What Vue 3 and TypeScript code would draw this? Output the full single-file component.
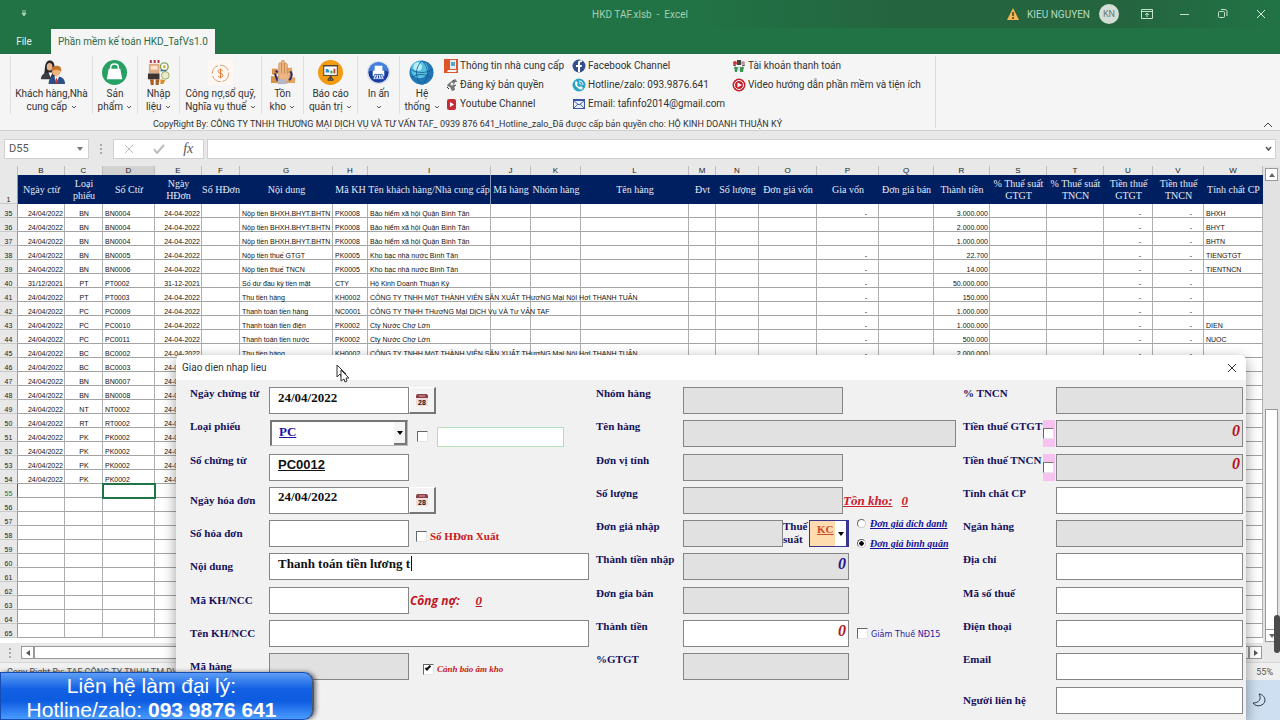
<script setup lang="ts">
import { ref } from 'vue'

interface BigAction { icon: string; lines: string[]; width: number }
interface LinkItem { icon: string; text: string }
interface Column { letter: string; title: string; width: number; align?: string }
interface Row { n: number; cells: Record<string, string> }

const icons: Record<string, string> = {
  people: '<path d="M8 2c3-3 8-1 8 4 0 4 2 5 1 8H5c2-3 0-8 3-12z" fill="#26262b"/><ellipse cx="11" cy="7" rx="3" ry="4" fill="#e9b48c"/><path d="M2 20c0-5 4-7 9-7s6 2 6 7z" fill="#3a3c44"/><path d="M10 13l2 5 2-5z" fill="#fff"/><circle cx="18" cy="12" r="4.500" fill="#eeb47c"/><path d="M13 12c0-5 3-6 6-6s5 3 4 6c-2-2-6-3-10 0z" fill="#c2772c"/><path d="M10 25c0-6 3-8 8-8s9 2 9 8z" fill="#2d4f87"/><path d="M16 17l2 7 3-7z" fill="#fff"/><path d="M18 18l-1 5 1 2 2-2z" fill="#c33"/>',
  bag: '<circle cx="13" cy="13" r="13" fill="#27a163"/><path d="M7 9h12l2 11H5z" fill="#fff"/><path d="M9 11V8c0-5 8-5 8 0v3" fill="none" stroke="#fff" stroke-width="1.500"/>',
  entry: '<path d="M4 0h2v3H4zM8 0h2v3H8zM12 0h2v3h-2z" fill="#b5344a"/><path d="M3 4h11v10H3z" fill="#e0a883"/><path d="M5 6h7v4H5z" fill="#f8e4cf"/><rect x="2" y="14" width="12" height="6" fill="#3a3532"/><path d="M4 20h4v6H5zM10 20h4l-1 6h-3z" fill="#a3622c"/><circle cx="19" cy="7" r="4" fill="#fff" stroke="#83a661" stroke-width="1.500"/><circle cx="19" cy="7" r="1.500" fill="#d8a92c"/><circle cx="20" cy="16" r="4" fill="#ede8cb" stroke="#8fb166"/><path d="M15 20l5 1-2 4h-3z" fill="#dc8a2d"/><path d="M15 11h6" stroke="#3774a0" stroke-width="1.500"/>',
  dollar: '<rect width="26" height="26" fill="#fdf8f3"/><circle cx="13" cy="14" r="8.500" fill="none" stroke="#dd9a72" stroke-dasharray="11 2"/><path d="M15.500 11.500c-1-2-5-2-5 .3 0 2.500 5 1.700 5 4.200s-4 2.500-5.300.5M13 9v10" fill="none" stroke="#e7752c"/>',
  stock: '<path d="M2 9h6v6H2zM1 17h8v7H1z" fill="#d99142"/><path d="M17 8h6v9h-6zM18 18h8v6h-8z" fill="#e3a65f"/><path d="M9 24V5c0-3 3-3 3 0V2c0-3 3-3 3 0v3c0-3 3-2 3 0v9c2-3 4-2 3 1l-3 9z" fill="#ecb581" stroke="#b87840" stroke-width=".600"/><path d="M12 5v9M15 5v9" stroke="#b87840" stroke-width=".700"/><path d="M5 14l3 8M21 12c3 2 1 7-1 9M6 11l2 2" stroke="#28246e" stroke-width="2" fill="none"/><path d="M8 20h9v5H8z" fill="#b4b5c6"/>',
  board: '<circle cx="13" cy="13" r="13" fill="#f39b11"/><rect x="6" y="6" width="14" height="10" fill="#fff" stroke="#493c31"/><path d="M5 6h16M13 16v5M10 21h6M13 17l-3 4M13 17l3 4" stroke="#493c31" stroke-width="1.200"/><path d="M8 13v-4a4 4 0 0 1 4 4z" fill="#2b91c8"/><path d="M13 14v-3h2v3z" fill="#35a34d"/><path d="M16 14V9h2v5z" fill="#d34735"/>',
  print: '<circle cx="13" cy="13" r="12" fill="#d6dfed"/><circle cx="13" cy="13" r="10.500" fill="#173fa2"/><path d="M3 12a10 10 0 0 1 20 0c-6-3-14-3-20 0z" fill="#4581dc"/><path d="M9 6h8v5H9zM7 11h12v6H7z" fill="#fff"/><path d="M9 15h8l2 5H7z" fill="#dbe7ff" stroke="#173fa2" stroke-width=".800"/><path d="M10 19l1-3M13 19v-3M16 19l-1-3" stroke="#173fa2"/>',
  globe: '<circle cx="13" cy="13" r="12.500" fill="#2176b5"/><circle cx="11" cy="10" r="9" fill="#54c1e0"/><circle cx="9" cy="7" r="4.500" fill="#b9effa"/><path d="M2 10c8 4 15 4 22 0M3 18c6-4 14-4 20 0M13 1c-7 8-7 17 0 25M14 1c7 8 7 17 0 25" stroke="#14568c" stroke-width=".800" fill="none"/>',
  supplier: '<rect width="14" height="14" fill="#df552a"/><path d="M6 1h6v9H6z" fill="#dfeef5"/><path d="M7 3h4v4H7z" fill="#58a5c8"/><path d="M4 11h9l-1 2H3z" fill="#f4f5f6"/>',
  key: '<path d="M4 6l5-4 3 1-2 3 1 6-3 1-2-4-3-1z" fill="#777"/><path d="M9 3c1-2 4-1 3 1M3 9l2 2M10 8l2-1" stroke="#333" fill="none"/><circle cx="8" cy="6" r="1.500" fill="#eee"/>',
  youtube: '<rect x="3" y="2" width="9" height="11" rx="2" fill="#c62d36"/><path d="M6 5l4 2.500-4 2.500z" fill="#fff"/>',
  facebook: '<circle cx="7" cy="7" r="6.500" fill="#344f8b"/><path d="M6 13V8H4V6h2V4c0-2 1.500-3 4-2.500V3C8 3 8 3.500 8 4v2h2l-.4 2H8v5z" fill="#fff"/>',
  phone: '<circle cx="7" cy="7" r="6.500" fill="#2aa3c4"/><path d="M4 3l2 2-1 1c0 2 2 3 3 3l1-1 2 2c-1 2-3 2-5 0-3-2-4-5-2-7z" fill="#fff"/><path d="M7 3c3 0 4 2 4 4M7 5c1.500 0 2 1 2 2" stroke="#fff" fill="none"/>',
  mail: '<rect x="1" y="2" width="12" height="10" fill="#3a56a0"/><rect x="2" y="4" width="10" height="7" fill="#e8effb"/><path d="M2 4l5 4 5-4M2 11l4-4M12 11L8 7" stroke="#3a56a0" fill="none" stroke-width=".900"/>',
  account: '<path d="M5 1h4v5H5z" fill="#444"/><circle cx="3" cy="4" r="2" fill="#c33"/><circle cx="11" cy="4" r="2" fill="#b99"/><path d="M2 8h4l-1 5H3zM8 8h4l-1 5H8z" fill="#3c9657"/><path d="M6 7h2v5H6z" fill="#ddd"/><path d="M1 6l3 1M10 7l3-1" stroke="#444"/>',
  video: '<circle cx="7" cy="7" r="6.500" fill="#c4202b"/><circle cx="7" cy="7" r="4.500" fill="#c4202b" stroke="#fff"/><path d="M5.500 4.500L10 7l-4.500 2.500z" fill="#fff"/>'
}

const actions: BigAction[] = [
  { icon: 'people', lines: ['Khách hàng,Nhà', 'cung cấp'], width: 82 },
  { icon: 'bag', lines: ['Sản', 'phẩm'], width: 45 },
  { icon: 'entry', lines: ['Nhập', 'liệu'], width: 42 },
  { icon: 'dollar', lines: ['Công nợ,sổ quỹ,', 'Nghĩa vụ thuế'], width: 82 },
  { icon: 'stock', lines: ['Tồn', 'kho'], width: 42 },
  { icon: 'board', lines: ['Báo cáo', 'quản trị'], width: 54 },
  { icon: 'print', lines: ['In ấn', ''], width: 42 },
  { icon: 'globe', lines: ['Hệ', 'thống'], width: 45 }
]

const links: { width: number; items: LinkItem[] }[] = [
  { width: 128, items: [
    { icon: 'supplier', text: 'Thông tin nhà cung cấp' },
    { icon: 'key', text: 'Đăng ký bản quyền' },
    { icon: 'youtube', text: 'Youtube Channel' }
  ] },
  { width: 160, items: [
    { icon: 'facebook', text: 'Facebook Channel' },
    { icon: 'phone', text: 'Hotline/zalo: 093.9876.641' },
    { icon: 'mail', text: 'Email: tafinfo2014@gmail.com' }
  ] },
  { width: 196, items: [
    { icon: 'account', text: 'Tài khoản thanh toán' },
    { icon: 'video', text: 'Video hướng dẫn phần mềm và tiện ích' }
  ] }
]

const columns: Column[] = [
  { letter: 'B', title: 'Ngày ctừ', width: 47, align: 'right' },
  { letter: 'C', title: 'Loại phiếu', width: 38, align: 'center' },
  { letter: 'D', title: 'Số Ctừ', width: 52 },
  { letter: 'E', title: 'Ngày HĐơn', width: 47, align: 'right' },
  { letter: 'F', title: 'Số HĐơn', width: 38 },
  { letter: 'G', title: 'Nội dung', width: 93 },
  { letter: 'H', title: 'Mã KH', width: 35 },
  { letter: 'I', title: 'Tên khách hàng/Nhà cung cấp', width: 123 },
  { letter: 'J', title: 'Mã hàng', width: 40 },
  { letter: 'K', title: 'Nhóm hàng', width: 50 },
  { letter: 'L', title: 'Tên hàng', width: 108 },
  { letter: 'M', title: 'Đvt', width: 27 },
  { letter: 'N', title: 'Số lượng', width: 43 },
  { letter: 'O', title: 'Đơn giá vốn', width: 58 },
  { letter: 'P', title: 'Gia vốn', width: 62, align: 'dash' },
  { letter: 'Q', title: 'Đơn giá bán', width: 55 },
  { letter: 'R', title: 'Thành tiền', width: 56, align: 'right' },
  { letter: 'S', title: '% Thuế suất GTGT', width: 57 },
  { letter: 'T', title: '% Thuế suất TNCN', width: 57 },
  { letter: 'U', title: 'Tiền thuế GTGT', width: 49, align: 'dash' },
  { letter: 'V', title: 'Tiền thuế TNCN', width: 51, align: 'dash' },
  { letter: 'W', title: 'Tính chất CP', width: 0 }
]

const insurer = 'Bảo hiểm xã hội Quận Bình Tân'
const treasury = 'Kho bạc nhà nước Bình Tân'
const producer = 'CÔNG TY TNHH MộT THÀNH VIÊN SẢN XUẤT THươNG MạI NộI HơI THANH TUẤN'
const adviser = 'CÔNG TY TNHH THươNG MạI DịCH Vụ VÀ Tư VẤN TAF'

const source: string[][] = [
  ['24/04/2022', 'BN', 'BN0004', 'Nộp tiền BHXH.BHYT.BHTN', 'PK0008', insurer, '-', '3.000.000', 'BHXH'],
  ['24/04/2022', 'BN', 'BN0004', 'Nộp tiền BHXH.BHYT.BHTN', 'PK0008', insurer, '', '2.000.000', 'BHYT'],
  ['24/04/2022', 'BN', 'BN0004', 'Nộp tiền BHXH.BHYT.BHTN', 'PK0008', insurer, '', '1.000.000', 'BHTN'],
  ['24/04/2022', 'BN', 'BN0005', 'Nộp tiền thuế GTGT', 'PK0005', treasury, '-', '22.700', 'TIENGTGT'],
  ['24/04/2022', 'BN', 'BN0006', 'Nộp tiền thuế TNCN', 'PK0005', treasury, '-', '14.000', 'TIENTNCN'],
  ['31/12/2021', 'PT', 'PT0002', 'Số dư đầu kỳ tiền mặt', 'CTY', 'Hộ Kinh Doanh Thuận Ký', '-', '50.000.000', ''],
  ['24/04/2022', 'PT', 'PT0003', 'Thu tiền hàng', 'KH0002', producer, '-', '150.000', ''],
  ['24/04/2022', 'PC', 'PC0009', 'Thanh toán tiền hàng', 'NC0001', adviser, '-', '1.000.000', ''],
  ['24/04/2022', 'PC', 'PC0010', 'Thanh toán tiền điện', 'PK0002', 'Cty Nước Chợ Lớn', '-', '1.000.000', 'DIEN'],
  ['24/04/2022', 'PC', 'PC0011', 'Thanh toán tiền nước', 'PK0002', 'Cty Nước Chợ Lớn', '-', '500.000', 'NUOC'],
  ['24/04/2022', 'BC', 'BC0002', 'Thu tiền hàng', 'KH0002', producer, '-', '2.000.000', ''],
  ['24/04/2022', 'BC', 'BC0003'],
  ['24/04/2022', 'BN', 'BN0007'],
  ['24/04/2022', 'BN', 'BN0008'],
  ['24/04/2022', 'NT', 'NT0002'],
  ['24/04/2022', 'RT', 'RT0002'],
  ['24/04/2022', 'PK', 'PK0002'],
  ['24/04/2022', 'PK', 'PK0002'],
  ['24/04/2022', 'PK', 'PK0002'],
  ['24/04/2022', 'PK', 'PK0002']
]

const rows: Row[] = Array.from({ length: 31 }, (_, i) => {
  const s = source[i]
  const cells: Record<string, string> = {}
  if (s) {
    cells.B = s[0]
    cells.C = s[1]
    cells.D = s[2]
    cells.E = s[0].split('/').join('-')
    if (s.length > 3) {
      Object.assign(cells, { G: s[3], H: s[4], I: s[5], P: s[6], R: s[7], U: '-', V: '-', W: s[8] })
    }
  }
  return { n: 35 + i, cells }
})

const form = ref({
  ngayCt: '24/04/2022', loai: 'PC', phu: '', soCt: 'PC0012', ngayHd: '24/04/2022', soHd: '',
  noiDung: 'Thanh toán tiền lương t', maKh: '', tenKh: '', maHang: '',
  nhom: '', tenHang: '', dvt: '', soLuong: '', giaNhap: '', thueSuat: 'KC', ttNhap: '0', giaBan: '', tt: '0', gtgt: '',
  xuat: false, chon: false, amKho: true, giam: false, cachGia: 'bq'
})

const rightFields = ref([
  { id: 'pct', label: '% TNCN', value: '', off: true },
  { id: 'tgtgt', label: 'Tiền thuế GTGT', value: '0', off: true, check: true },
  { id: 'ttncn', label: 'Tiền thuế TNCN', value: '0', off: true, check: true },
  { id: 'cp', label: 'Tính chất CP', value: '' },
  { id: 'bank', label: 'Ngân hàng', value: '', off: true },
  { id: 'addr', label: 'Địa chỉ', value: '' },
  { id: 'mst', label: 'Mã số thuế', value: '' },
  { id: 'tel', label: 'Điện thoại', value: '' },
  { id: 'email', label: 'Email', value: '' },
  { id: 'contact', label: 'Người liên hệ', value: '', mid: true }
])
</script>

<template>
  <div class="app">
    <header class="titlebar">
      <div class="quick"><svg width="8" height="8" viewBox="0 0 8 8"><path d="M2 1h4M2 3h4L4 6z" stroke="#a8d3b8" fill="#a8d3b8" /></svg></div>
      <div class="doc-name">HKD TAF.xlsb&nbsp; -&nbsp; Excel</div>
      <div class="account">
        <svg width="12" height="12" viewBox="0 0 12 12"><path d="M6 0l6 12H0z" fill="#f4b553" /><path d="M6 4v4M6 9v2" stroke="#4a3a20" stroke-width="1.500" /></svg>
        <span class="user">KIEU NGUYEN</span>
        <span class="avatar">KN</span>
        <div class="win-buttons">
          <button aria-label="Ribbon display"><svg width="12" height="10" viewBox="0 0 12 10"><path d="M.5.5h11v9H.5zM.5 2.500h11M6 8V4M4 6l2-2 2 2" fill="none" stroke="#c3e3cf" /></svg></button>
          <button aria-label="Minimize"><svg width="10" height="10" viewBox="0 0 10 10"><path d="M0 5.500h9" stroke="#c3e3cf" /></svg></button>
          <button aria-label="Restore"><svg width="10" height="10" viewBox="0 0 10 10"><rect x=".5" y="2.500" width="6" height="6" rx="1" fill="none" stroke="#c3e3cf" /><path d="M3 .5h4q2 0 2 2V7" fill="none" stroke="#c3e3cf" /></svg></button>
          <button aria-label="Close"><svg width="10" height="10" viewBox="0 0 10 10"><path d="M1 1l8 8M9 1L1 9" stroke="#d7eedf" /></svg></button>
        </div>
      </div>
    </header>
    <nav class="tabs">
      <button class="tab file">File</button>
      <button class="tab active">Phần mềm kế toán HKD_TafVs1.0</button>
    </nav>

    <section class="ribbon">
      <div class="ribbon-group">
        <div class="ribbon-row">
          <button v-for="a in actions" :key="a.icon" class="big" :style="{ width: a.width + 'px' }">
            <svg width="26" height="26" viewBox="0 0 27 27" v-html="icons[a.icon]"></svg>
            <span>{{ a.lines[0] }}</span>
            <span>{{ a.lines[1] }} <svg width="6" height="4" viewBox="0 0 6 4"><path d="M1 1l2 2 2-2" fill="none" stroke="#555" /></svg></span>
          </button>
          <div v-for="(c, i) in links" :key="i" class="links" :style="{ width: c.width + 'px' }">
            <button v-for="l in c.items" :key="l.icon"><svg width="14" height="14" viewBox="0 0 14 14" v-html="icons[l.icon]"></svg><span>{{ l.text }}</span></button>
          </div>
        </div>
        <div class="copyright">CopyRight By: CÔNG TY TNHH THƯƠNG MẠI DỊCH VỤ VÀ TƯ VẤN TAF_ 0939 876 641_Hotline_zalo_Đã được cấp bản quyền cho: HỘ KINH DOANH THUẬN KÝ</div>
      </div>
      <button class="collapse" aria-label="Collapse ribbon"><svg width="10" height="6" viewBox="0 0 10 6"><path d="M1 5l4-4 4 4" fill="none" stroke="#444" /></svg></button>
    </section>

    <section class="formula">
      <div class="name-box"><input aria-label="Name box" value="D55"><svg width="6" height="4" viewBox="0 0 6 4"><path d="M0 0h6L3 4z" fill="#777" /></svg></div>
      <svg class="dots" width="2" height="10" viewBox="0 0 2 10"><path d="M0 0h2v2H0zM0 4h2v2H0zM0 8h2v2H0z" fill="#aaa" /></svg>
      <div class="fx-group">
        <button aria-label="Cancel"><svg width="10" height="10" viewBox="0 0 10 10"><path d="M1 1l8 8M9 1L1 9" stroke="#bbb" /></svg></button>
        <button aria-label="Enter"><svg width="12" height="10" viewBox="0 0 12 10"><path d="M1 5l3 4 7-8" fill="none" stroke="#bbb" stroke-width="2" /></svg></button>
        <button class="fx">fx</button>
      </div>
      <div class="formula-input"><input aria-label="Formula"><svg width="7" height="5" viewBox="0 0 7 5"><path d="M1 1l2.500 3L6 1" fill="none" stroke="#555" stroke-width="1.500" /></svg></div>
    </section>

    <main class="sheet">
      <div class="grid">
        <table>
          <colgroup>
            <col class="num-col">
            <col v-for="c in columns" :key="c.letter" :style="{ width: c.width ? c.width + 'px' : 'auto' }">
          </colgroup>
          <thead>
            <tr class="letters">
              <th></th>
              <th v-for="c in columns" :key="c.letter" :class="{ on: c.letter === 'D' }">{{ c.letter }}</th>
            </tr>
            <tr class="titles">
              <th class="n">1</th>
              <th v-for="c in columns" :key="c.letter" :class="{ line: c.letter === 'I' }">{{ c.title }}</th>
            </tr>
          </thead>
          <tbody>
            <tr v-for="r in rows" :key="r.n">
              <th class="n" :class="{ on: r.n === 55 }">{{ r.n }}</th>
              <td v-for="c in columns" :key="c.letter" :class="[c.align, { selected: r.n === 55 && c.letter === 'D' }]">{{ r.cells[c.letter] }}</td>
            </tr>
          </tbody>
        </table>
      </div>
      <div class="vscroll">
        <button aria-label="Scroll up"><svg width="6" height="4" viewBox="0 0 6 4"><path d="M0 4h6L3 0z" fill="#666" /></svg></button>
        <div class="vtrack"><div class="vthumb"></div></div>
        <button aria-label="Scroll down"><svg width="6" height="4" viewBox="0 0 6 4"><path d="M0 0h6L3 4z" fill="#666" /></svg></button>
        <div class="pill"></div>
      </div>
    </main>
    <div class="hscroll">
      <svg class="dots" width="2" height="10" viewBox="0 0 2 10"><path d="M0 0h2v2H0zM0 4h2v2H0zM0 8h2v2H0z" fill="#aaa" /></svg>
      <button aria-label="Scroll left"><svg width="4" height="6" viewBox="0 0 4 6"><path d="M4 0v6L0 3z" fill="#555" /></svg></button>
      <div class="hthumb"></div>
      <button aria-label="Scroll right"><svg width="4" height="6" viewBox="0 0 4 6"><path d="M0 0v6l4-3z" fill="#555" /></svg></button>
    </div>
    <footer class="status"><span>Copy Right By: TAF CÔNG TY TNHH TM DV V</span><span>55%</span></footer>
    <div class="taskbar"><svg width="14" height="14" viewBox="0 0 14 14"><path d="M7 1c3 5 0 9-6 9 3 5 12 3 12-3 0-3-3-6-6-6z" fill="none" stroke="#333c50" /></svg></div>

    <section class="dialog" role="dialog" aria-label="Giao dien nhap lieu">
      <div class="dialog-title">
        <span>Giao dien nhap lieu</span>
        <button aria-label="Close dialog"><svg width="10" height="10" viewBox="0 0 10 10"><path d="M1 1l8 8M9 1L1 9" stroke="#333" /></svg></button>
      </div>
      <form class="dialog-body" @submit.prevent>
        <div class="group first">
          <div class="row">
            <label class="cap" for="ngayCt">Ngày chứng từ</label>
            <input id="ngayCt" v-model="form.ngayCt" class="box">
            <button class="cal" aria-label="Chọn ngày chứng từ"><svg width="14" height="14" viewBox="0 0 14 14"><rect x="1" y="2" width="12" height="11" rx="1" fill="#f0dcdc" /><path d="M1 5V3q0-2 2-2h8q2 0 2 2v2z" fill="#8d4048" /><path d="M4 3h6" stroke="#d8a8ac" /><text x="7" y="12" text-anchor="middle" class="day">28</text></svg></button>
          </div>
          <div class="row">
            <label class="cap" for="loai">Loại phiếu</label>
            <span class="combo"><select id="loai" v-model="form.loai"><option>PC</option></select><i class="drop"><svg width="6" height="4" viewBox="0 0 6 4"><path d="M0 0h6L3 4z" /></svg></i></span>
            <input v-model="form.chon" type="checkbox" class="chk" aria-label="Chọn">
            <input v-model="form.phu" class="extra" aria-label="Mã phụ">
          </div>
          <div class="row">
            <label class="cap" for="soCt">Số chứng từ</label>
            <input id="soCt" v-model="form.soCt" class="box sans">
          </div>
          <div class="row">
            <label class="cap mid" for="ngayHd">Ngày hóa đơn</label>
            <input id="ngayHd" v-model="form.ngayHd" class="box">
            <button class="cal" aria-label="Chọn ngày hóa đơn"><svg width="14" height="14" viewBox="0 0 14 14"><rect x="1" y="2" width="12" height="11" rx="1" fill="#f0dcdc" /><path d="M1 5V3q0-2 2-2h8q2 0 2 2v2z" fill="#8d4048" /><path d="M4 3h6" stroke="#d8a8ac" /><text x="7" y="12" text-anchor="middle" class="day">28</text></svg></button>
          </div>
          <div class="row">
            <label class="cap mid" for="soHd">Số hóa đơn</label>
            <input id="soHd" v-model="form.soHd" class="box">
            <label class="tick"><input v-model="form.xuat" type="checkbox" class="chk"><span>Số HĐơn Xuất</span></label>
          </div>
          <div class="row">
            <label class="cap mid" for="noiDung">Nội dung</label>
            <span class="typing"><input id="noiDung" v-model="form.noiDung" class="box wide"><i class="caret"></i></span>
          </div>
          <div class="row">
            <label class="cap mid" for="maKh">Mã KH/NCC</label>
            <input id="maKh" v-model="form.maKh" class="box">
            <span class="debt">Công nợ:</span><span class="debt-value">0</span>
          </div>
          <div class="row">
            <label class="cap mid" for="tenKh">Tên KH/NCC</label>
            <input id="tenKh" v-model="form.tenKh" class="box wide">
          </div>
          <div class="row">
            <label class="cap mid" for="maHang">Mã hàng</label>
            <input id="maHang" v-model="form.maHang" class="box off">
            <label class="tick warn"><input v-model="form.amKho" type="checkbox" class="chk"><span>Cảnh báo âm kho</span></label>
          </div>
        </div>

        <div class="group second">
          <div class="row"><label class="cap" for="nhom">Nhóm hàng</label><input id="nhom" v-model="form.nhom" class="box off"></div>
          <div class="row"><label class="cap" for="tenHang">Tên hàng</label><input id="tenHang" v-model="form.tenHang" class="box off wide"></div>
          <div class="row"><label class="cap" for="dvt">Đơn vị tính</label><input id="dvt" v-model="form.dvt" class="box off"></div>
          <div class="row">
            <label class="cap" for="soLuong">Số lượng</label><input id="soLuong" v-model="form.soLuong" class="box off">
            <span class="remain"><u>Tồn kho:</u><u>0</u></span>
          </div>
          <div class="row">
            <label class="cap" for="giaNhap">Đơn giá nhập</label><input id="giaNhap" v-model="form.giaNhap" class="box off short">
            <label class="rate-label" for="thueSuat">Thuế suất</label>
            <span class="combo rate"><select id="thueSuat" v-model="form.thueSuat"><option>KC</option></select><i class="drop"><svg width="6" height="4" viewBox="0 0 6 4"><path d="M0 0h6L3 4z" /></svg></i></span>
            <span class="radios">
              <label><input v-model="form.cachGia" type="radio" name="gia" value="dd"><u>Đơn giá đích danh</u></label>
              <label><input v-model="form.cachGia" type="radio" name="gia" value="bq"><u>Đơn giá bình quân</u></label>
            </span>
          </div>
          <div class="row"><label class="cap" for="ttNhap">Thành tiền nhập</label><input id="ttNhap" v-model="form.ttNhap" class="box off money zero blue"></div>
          <div class="row"><label class="cap" for="giaBan">Đơn gía bán</label><input id="giaBan" v-model="form.giaBan" class="box off money"></div>
          <div class="row">
            <label class="cap" for="tt">Thành tiền</label><input id="tt" v-model="form.tt" class="box money zero">
            <label class="tick cut"><input v-model="form.giam" type="checkbox" class="chk"><span>Giảm Thuế NĐ15</span></label>
          </div>
          <div class="row"><label class="cap" for="gtgt">%GTGT</label><input id="gtgt" v-model="form.gtgt" class="box off money"></div>
        </div>

        <div class="group third">
          <div v-for="f in rightFields" :key="f.id" class="row">
            <label class="cap" :class="{ mid: f.mid }" :for="f.id">{{ f.label }}</label>
            <span class="pink" :class="{ shown: f.check }"><input v-if="f.check" type="checkbox" class="chk" :aria-label="'Tính ' + f.label"></span>
            <input :id="f.id" v-model="f.value" class="box zero" :class="{ off: f.off }">
          </div>
        </div>
      </form>
    </section>

    <svg class="pointer" width="14" height="20" viewBox="0 0 14 20"><path d="M1 1v12l3-3 2 5 2-1-2-4h4z" fill="#fff" stroke="#333" /><path d="M5 6v11l3-2 1 3 2-1-1-3h3z" fill="#fff" stroke="#333" /></svg>
    <aside class="banner"><div>Liên hệ làm đại lý:</div><div>Hotline/zalo: <b>093 9876 641</b></div></aside>
  </div>
</template>

<style>
html, body { margin: 0; }
</style>

<style scoped>
.app { position: relative; display: flex; flex-direction: column; height: 100vh; overflow: hidden; background: #e8e8e8; color: #333; font: 11px/13px Roboto, "Noto Sans", sans-serif; }
.app *, .app *::before, .app *::after { box-sizing: border-box; }
button { padding: 0; border: 0; background: none; color: inherit; font: inherit; }
input, select { margin: 0; padding: 0; border: 0; border-radius: 0; background: none; color: inherit; font: inherit; outline: none; appearance: none; }
svg { flex: none; }

.titlebar { display: grid; grid-template-columns: 1fr auto 1fr; align-items: center; height: 28px; flex: none; background: #217346; color: #a3d0b3; }
.quick { padding-left: 20px; }
.quick svg { display: block; }
.account { display: flex; align-items: center; justify-content: flex-end; color: #b4dac1; background: linear-gradient(90deg, #217346, #24653f 35%, #24653f 75%, #217346); height: 28px; }
.user { margin: 0 9px 0 8px; font-size: 10px; }
.avatar { display: grid; place-items: center; width: 20px; height: 20px; border-radius: 10px; background: #d5ded6; color: #6d7a70; font-size: 9px; }
.win-buttons { display: flex; margin-left: 9px; }
.win-buttons button { width: 38px; height: 28px; display: grid; place-items: center; }
.doc-name { font-size: 10px; }
.tabs { display: flex; flex: none; height: 26px; background: #217346; font-size: 10px; }
.tab { padding: 0 7px; color: #e3f1e8; }
.file { width: 51px; padding: 0; padding-right: 3px; }
.active { background: #f5f5f5; color: #2c6b49; margin-top: 1px; }

.ribbon { display: flex; flex: none; justify-content: space-between; height: 77px; background: #f5f5f5; border-bottom: 1px solid #cfcfcf; font-size: 10px; }
.ribbon-group { width: 936px; border-right: 1px solid #dcdcdc; margin: 2px 0; }
.ribbon-row { display: flex; padding-left: 10px; height: 61px; }
.big { display: flex; flex-direction: column; align-items: center; flex: none; height: 58px; padding-top: 4px; white-space: nowrap; border-left: 1px solid #e0e0e0; }
.big > svg { margin-bottom: 1px; }
.big span { height: 13px; }
.big span svg { vertical-align: middle; margin-left: 1px; }
.links { display: flex; flex-direction: column; flex: none; }
.links button { display: flex; align-items: center; gap: 2px; height: 19px; white-space: nowrap; }
.copyright { text-align: center; font-size: 9px; line-height: 14px; white-space: nowrap; color: #333; }
.collapse { align-self: flex-end; width: 24px; height: 12px; }

.formula { display: flex; align-items: center; flex: none; height: 35px; padding: 0 4px; background: #e8e8e8; }
.name-box { display: flex; align-items: center; width: 85px; height: 20px; padding: 0 5px 0 4px; background: #fff; border: 1px solid #d0d0d0; }
.name-box input { width: 68px; color: #555; }
.dots { margin: 0 11px; }
.fx-group { display: flex; width: 91px; height: 20px; background: #fff; border: 1px solid #d0d0d0; }
.fx-group button { flex: 1; display: grid; place-items: center; }
.fx { font: italic 14px/16px "Liberation Serif", serif; color: #555; }
.formula-input { display: flex; align-items: center; flex: 1; height: 20px; margin-left: 3px; padding-right: 3px; background: #fff; border: 1px solid #d0d0d0; }
.formula-input input { flex: 1; }

.sheet { display: flex; flex: 1; min-height: 0; }
.grid { flex: 1; min-width: 0; overflow: hidden; background: #fff; }
table { width: 100%; table-layout: fixed; border-collapse: separate; border-spacing: 0; }
.num-col { width: 18px; }
th, td { padding: 0; font-weight: 400; }
.letters th { height: 9px; background: #e8e8e8; border-right: 1px solid #bdbdbd; font: 8px/9px "Liberation Sans", sans-serif; color: #222; }
.letters .on { background: #d2d2d0; }
.titles th { height: 29px; background: #001f60; color: #e4e9f5; font: 10px/12px "Liberation Serif", serif; white-space: normal; }
.titles th.line { border-right: 1px solid #8893b5; }
.titles th:nth-child(9), .titles th:last-child { white-space: nowrap; }
tr .n, .titles .n { background: #e8e8e8; border-right: 1px solid #999; border-bottom: 1px solid #c8c8c8; color: #222; font: 7px/7px "Liberation Sans", sans-serif; vertical-align: bottom; }
td { height: 14px; padding: 6px 1px 0 2px; border-right: 1px solid #b0b0b0; border-bottom: 1px solid #a4a4a4; font: 7px/7px "Liberation Sans", sans-serif; color: #111; white-space: nowrap; }
.right { text-align: right; }
.center { text-align: center; }
.dash { text-align: right; padding-right: 11px; }
td.selected { outline: 2px solid #217346; outline-offset: -1px; }
.n.on { border-right-color: #217346; color: #217346; }

.vscroll { position: relative; display: flex; flex-direction: column; width: 17px; padding: 2px 2px 1px; background: #e2e2e2; }
.vscroll button { height: 13px; flex: none; display: grid; place-items: center; background: #fff; border: 1px solid #999; }
.vtrack { flex: 1; padding-top: 228px; }
.vthumb { height: 100%; background: #fff; border: 1px solid #999; border-bottom: 0; }
.pill { position: absolute; right: 0; bottom: -10px; width: 6px; height: 38px; border-radius: 3px; background: #4b4b4b; }
.hscroll { display: flex; align-items: center; flex: none; height: 19px; padding-right: 18px; background: #e8e8e8; }
.hscroll .dots { margin: 0 10px 0 9px; }
.hscroll button { width: 13px; height: 13px; display: grid; place-items: center; background: #fff; border: 1px solid #999; }
.hthumb { flex: 1; height: 13px; background: #fff; border: 1px solid #999; }
.status { display: flex; justify-content: space-between; flex: none; height: 18px; padding: 0 7px; line-height: 18px; font-size: 9px; background: #f0f0f0; border-top: 1px solid #d5d5d5; color: #555; }
.taskbar { display: flex; align-items: center; justify-content: flex-end; flex: none; height: 40px; padding-right: 14px; background: #cddff1; }

.dialog { position: absolute; top: 355px; right: 34px; bottom: 0; left: 176px; overflow: hidden; background: #f1f1f1; border-radius: 6px 6px 0 0; box-shadow: 0 4px 14px rgba(0, 0, 0, .4); }
.dialog-title { display: flex; align-items: center; justify-content: space-between; height: 25px; padding: 0 9px 0 6px; background: #fff; font-size: 10px; }
.dialog-title button { display: grid; }
.dialog-body { display: flex; align-items: flex-start; padding: 7px 3px 0 14px; font-family: "Liberation Serif", serif; font-weight: 700; }
.group { display: grid; grid-template-rows: repeat(10, 1fr); height: 333px; flex: none; }
.first { width: 406px; }
.second { width: 367px; }
.third { flex: 1; }
.row { display: flex; align-items: flex-start; min-height: 0; min-width: 0; }
.cap { flex: none; height: 27px; width: 79px; font-size: 11px; line-height: 13px; color: #15105c; white-space: nowrap; }
.cap.mid { padding-top: 7px; }
.second .cap { width: 87px; }
.third .cap { width: 80px; }
.box { width: 140px; height: 27px; padding: 0 8px 6px; background: #fff; border: 1px solid #858585; color: #111; font-size: 13px; flex: none; }
.box.wide { width: 320px; }
.box.off { background: #e1e1e1; }
.sans { font-family: "Liberation Sans", sans-serif; text-decoration: underline; }
.second .box { width: 160px; }
.second .box.wide { width: 273px; }
.second .box.short { width: 100px; }
.second .box.money { width: 166px; }
.third .box { flex: 1; }
.box.zero { padding-right: 2px; text-align: right; font-style: italic; font-size: 16px; color: #b5121b; }
.box.blue { color: #1c1295; }
.cal { display: grid; place-items: center; width: 27px; height: 27px; background: #f4f4f4; border: 1px solid #fff; border-right: 2px solid #777; border-bottom: 2px solid #777; }
.day { font: 700 7px "Liberation Sans", sans-serif; fill: #111; }
.combo { position: relative; width: 138px; height: 26px; flex: none; border: 1px solid #bbb; border-top: 2px solid #777; border-left: 2px solid #777; background: #fff; margin-left: 1px; }
.combo select { width: 100%; height: 100%; padding: 0 7px 5px; color: #1c12a8; font-size: 13px; font-weight: 700; text-decoration: underline; }
.drop { position: absolute; top: 0; right: 0; bottom: 0; display: grid; place-items: center; width: 13px; background: #f4f4f4; border-right: 2px solid #777; border-bottom: 2px solid #777; pointer-events: none; }
.chk { width: 11px; height: 11px; flex: none; background: #fff; border: 1px solid #e6e6e6; border-top-color: #666; border-left-color: #666; }
.chk:checked::after { content: ""; display: block; width: 6px; height: 3px; margin: 1px; border: solid #111; border-width: 0 0 2px 2px; transform: rotate(-45deg); }
.row > .chk { margin: 11px 9px 0 9px; }
.extra { width: 127px; height: 20px; margin-top: 7px; background: #fff; border: 1px solid #b5dfb9; }
.tick { display: flex; align-items: center; gap: 3px; height: 27px; padding: 6px 0 0 7px; color: #c81820; white-space: nowrap; }
.first .tick { font-size: 11px; }
.first .warn { padding-left: 14px; font-size: 9px; font-style: italic; }
.typing { position: relative; flex: none; }
.caret { position: absolute; top: 3px; left: 142px; width: 1px; height: 15px; background: #111; }
.debt { padding: 6px 0 0 1px; color: #c1151d; font: italic 700 12px/15px "Open Sans", sans-serif; white-space: nowrap; }
.debt-value { margin: 7px 0 0 16px; color: #c1151d; font-size: 13px; font-style: italic; text-decoration: underline; }
.remain { display: flex; gap: 9px; padding-top: 7px; color: #c8202b; font-size: 13px; font-style: italic; white-space: nowrap; }
.rate-label { width: 26px; line-height: 13px; color: #15105c; }
.combo.rate { margin: 0; width: 40px; height: 27px; border: 1px solid #3a3690; background: #fff; }
.rate select { width: 26px; padding: 0 0 8px 7px; background: #ffdcae; color: #cf4a2b; font-size: 11px; }
.rate .drop { border-color: #3a3690; border-width: 0 2px 0 0; background: #fff; }
.radios { display: flex; flex-direction: column; margin: -7px 0 0 8px; }
.radios label { display: flex; align-items: center; gap: 4px; height: 20px; color: #15109a; font-size: 10px; font-style: italic; white-space: nowrap; }
.radios input { width: 9px; height: 9px; background: #fff; border: 1px solid #ccc; border-top-color: #666; border-left-color: #666; border-radius: 5px; }
.radios input:checked { background: radial-gradient(circle, #000 40%, #fff 50%); }
.cut { padding-top: 0; margin-left: 1px; color: #2a1c9b; font: 9px/12px "DejaVu Sans Condensed", "DejaVu Sans", sans-serif; }
.pink { width: 13px; height: 27px; flex: none; padding-top: 8px; }
.pink.shown { background: linear-gradient(90deg, #f6c3f0 12px, transparent 12px); }
.pink .chk { display: block; border-top: 1px solid #777; }

.pointer { position: absolute; top: 364px; left: 336px; }
.banner { position: absolute; bottom: 0; left: 0; width: 314px; height: 48px; padding: 1px 10px 0 0; border-radius: 0 10px 10px 0; border: 1px solid #174cb0; border-right: 2px solid #4d596f; background: linear-gradient(#5d9df5, #1261e4 35%, #0d5be0 60%, #4a9bff); color: #fff; text-align: center; font: 21px/24px "Liberation Sans", sans-serif; white-space: nowrap; box-shadow: 2px 0 4px rgba(0, 0, 0, .5); }
</style>
